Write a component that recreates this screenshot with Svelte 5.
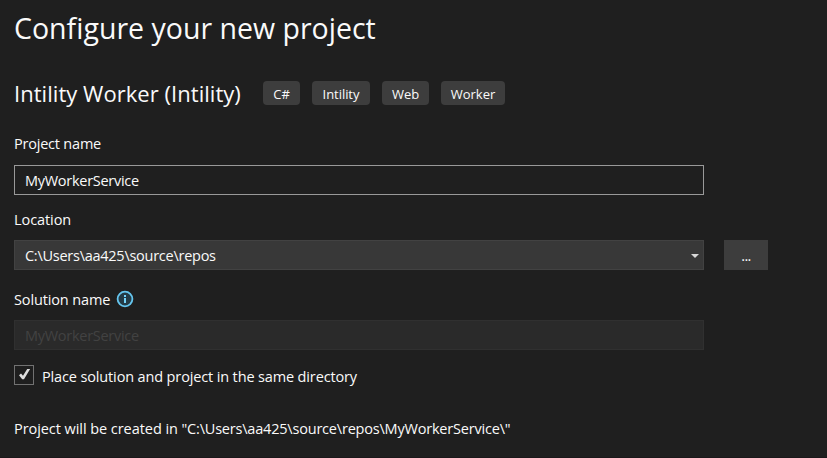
<script>
  const tags = [
    { label: 'C#', width: 37 },
    { label: 'Intility', width: 58 },
    { label: 'Web', width: 47 },
    { label: 'Worker', width: 64 }
  ];
  const project = 'MyWorkerService';
  const location = 'C:\\Users\\aa425\\source\\repos';
  const target = `"${location}\\${project}\\"`;
</script>

<main>
  <h1>Configure your new project</h1>
  <section class="template">
    <h2>Intility Worker (Intility)</h2>
    <div class="tags">
      {#each tags as tag}
        <span class="tag" style="width: {tag.width}px">{tag.label}</span>
      {/each}
    </div>
  </section>

  <div class="label name-label"><span class="t-project">Project name</span></div>
  <div class="field name"><span class="t-name">{project}</span></div>

  <div class="label location-label"><span class="t-location">Location</span></div>
  <div class="row">
    <div class="field select">
      <span class="t-path">{location}</span>
      <svg width="8" height="4" viewBox="0 0 8 4"><path d="M0 0h8L4 4z" fill="#d8d8d8" /></svg>
    </div>
    <button>...</button>
  </div>

  <div class="label solution-label">
    <span class="t-solution">Solution name</span>
    <svg width="18" height="18" viewBox="0 0 18 18">
      <circle cx="9" cy="9" r="7.4" fill="#243b46" stroke="#65c5ee" stroke-width="1.8" />
      <path d="M8 5h2v2H8zM8 8h2v5H8z" fill="#75d3fa" />
    </svg>
  </div>
  <div class="field disabled"><span class="t-name">{project}</span></div>

  <div class="check">
    <div class="box">
      <svg width="18" height="18" viewBox="0 0 18 18"><path d="M4 9.3 6 7.6 8 9.8 12.2 3h2.9L9 13.3H7.2z" fill="#dedede" /></svg>
    </div>
    <span class="t-check">Place solution and project in the same directory</span>
  </div>
  <p>Project will be created in <span class="t-target">{target}</span></p>
</main>

<style>
  :global(body) { background: #1f1f1f; }
  main {
    box-sizing: border-box;
    width: 827px;
    height: 458px;
    padding: 9px 14px 0;
    overflow: hidden;
    display: flex;
    flex-direction: column;
    background: #1f1f1f;
    border-bottom: 1px solid #1b181a;
    color: #fafafa;
    font: 14.5px/20px "Open Sans", "Noto Sans", sans-serif;
    white-space: pre;
  }
  h1, h2, p { margin: 0; font-weight: 400; }
  h1 { height: 40px; font-size: 28.5px; line-height: 39px; letter-spacing: 0.01px; }
  .template { display: flex; height: 30px; margin-top: 30px; }
  h2 { width: 249px; font-size: 22px; line-height: 29px; letter-spacing: 0.04px; }
  .tags { display: flex; gap: 12px; padding-top: 2px; }
  .tag {
    height: 24px;
    border-radius: 4px;
    background: #3d3d3d;
    font-size: 13px;
    line-height: 26px;
    text-align: center;
    letter-spacing: -0.05px;
  }
  .label { display: flex; height: 20px; }
  .name-label { margin-top: 25px; }
  .location-label { margin-top: 15px; }
  .solution-label { margin-top: 20px; gap: 6px; }
  .t-project { letter-spacing: -0.21px; }
  .t-name { letter-spacing: -0.28px; }
  .t-location { letter-spacing: -0.08px; }
  .t-path { letter-spacing: -0.26px; }
  .t-solution { letter-spacing: -0.13px; }
  .t-check { letter-spacing: -0.14px; }
  .field {
    box-sizing: border-box;
    display: flex;
    align-items: center;
    justify-content: space-between;
    width: 690px;
    height: 30px;
    padding: 0 4px 0 10px;
    border: 1px solid #999;
  }
  .field > span { line-height: 20px; padding-top: 2px; }
  .name { margin-top: 11px; }
  .row { display: flex; gap: 20px; margin-top: 10px; }
  .select { background: #383838; border-color: #424242; }
  .select svg { margin-top: 2px; }
  button {
    width: 44px;
    height: 30px;
    padding: 2px 0 0;
    border: 0;
    background: #3d3d3d;
    color: #fafafa;
    font: inherit;
    letter-spacing: -0.6px;
  }
  .disabled { margin-top: 10px; background: #2a2a2a; border-color: #303030; color: #424242; }
  .check { display: flex; gap: 8px; height: 22px; margin-top: 15px; }
  .check > span { line-height: 24px; }
  .box { box-sizing: border-box; width: 20px; height: 20px; border: 1px solid #727272; }
  .box svg { display: block; }
  p { margin-top: 32px; letter-spacing: -0.06px; }
  .t-target { letter-spacing: -0.2px; }
</style>
